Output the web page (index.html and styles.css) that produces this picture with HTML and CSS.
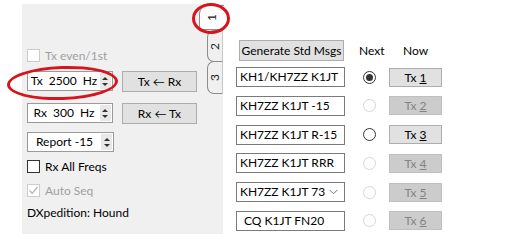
FILE: index.html
```html
<!DOCTYPE html>
<html lang="en">
<head>
    <meta charset="UTF-8">
    <meta name="viewport" content="width=device-width, initial-scale=1.0">
    <title>Tx Messages</title>
    <link rel="stylesheet" href="styles.css">
</head>
<body>
    <div class="window">
        <div class="panel">
            <div class="controls">
                <div class="check disabled"><span class="box"></span>Tx even/1st</div>
                <div class="spin-row">
                    <div class="spin">
                        <span class="spin-text">Tx  2500  Hz</span>
                        <span class="arrows"><i class="up"></i><i class="down"></i></span>
                    </div>
                    <button class="btn swap">Tx ← Rx</button>
                </div>
                <div class="spin-row second">
                    <div class="spin">
                        <span class="spin-text">Rx  300  Hz</span>
                        <span class="arrows"><i class="up"></i><i class="down"></i></span>
                    </div>
                    <button class="btn swap">Rx ← Tx</button>
                </div>
                <div class="spin report">
                    <span class="spin-text">Report -15</span>
                    <span class="arrows"><i class="up"></i><i class="down"></i></span>
                </div>
                <div class="check rx-all"><span class="box"></span>Rx All Freqs</div>
                <div class="check disabled auto-seq">
                    <span class="box">
                        <svg width="11" height="11" viewBox="0 0 11 11"><polyline points="1.5,5.5 4.2,8.3 9.5,2" fill="none" stroke="#b5b5b5" stroke-width="1.3"/></svg>
                    </span>Auto Seq
                </div>
                <div class="mode">DXpedition: Hound</div>
            </div>
            <div class="tabs">
                <div class="tab active"><span>1</span></div>
                <div class="tab"><span>2</span></div>
                <div class="tab"><span>3</span></div>
            </div>
        </div>

        <div class="messages">
            <div class="msg-head">
                <button class="btn gen">Generate Std Msgs</button>
                <span class="head-next">Next</span>
                <span class="head-now">Now</span>
            </div>
            <div class="msg-grid">
                <div class="field">KH1/KH7ZZ K1JT</div>
                <span class="radio checked"></span>
                <button class="btn tx">Tx <u>1</u></button>

                <div class="field">KH7ZZ K1JT -15</div>
                <span class="radio off"></span>
                <button class="btn tx off">Tx <u>2</u></button>

                <div class="field">KH7ZZ K1JT R-15</div>
                <span class="radio"></span>
                <button class="btn tx">Tx <u>3</u></button>

                <div class="field">KH7ZZ K1JT RRR</div>
                <span class="radio off"></span>
                <button class="btn tx off">Tx <u>4</u></button>

                <div class="field combo">KH7ZZ K1JT 73
                    <svg class="chevron" width="9" height="6" viewBox="0 0 9 6"><polyline points="0.5,0.8 4.5,4.8 8.5,0.8" fill="none" stroke="#777" stroke-width="1"/></svg>
                </div>
                <span class="radio off"></span>
                <button class="btn tx off">Tx <u>5</u></button>

                <div class="field indent">CQ K1JT FN20</div>
                <span class="radio off"></span>
                <button class="btn tx off">Tx <u>6</u></button>
            </div>
        </div>
    </div>

    <div class="mark mark-tab"></div>
    <div class="mark mark-freq"></div>
</body>
</html>
```

FILE: styles.css
```css
body {
    margin: 0;
    background-color: #fff;
    font-family: Lato, "Liberation Sans", sans-serif;
    font-size: 12px;
    color: #000;
    width: 508px;
    height: 252px;
    position: relative;
    overflow: hidden;
}

.window {
    display: flex;
    padding: 4px 0 0 22px;
}

.panel {
    display: flex;
    width: 201px;
    height: 230px;
    background-color: #f0f0f0;
}

.controls {
    width: 175px;
    padding-left: 5px;
    box-sizing: border-box;
    display: flex;
    flex-direction: column;
}

/* checkboxes */
.check {
    display: flex;
    align-items: center;
    gap: 5px;
    height: 13px;
    line-height: 13px;
    margin-top: 45px;
}

.check .box {
    width: 13px;
    height: 13px;
    box-sizing: border-box;
    border: 1px solid #333;
    background-color: #fff;
    display: flex;
    align-items: center;
    justify-content: center;
}

.check.disabled {
    color: #a0a0a0;
}

.check.disabled .box {
    border-color: #cccccc;
}

.rx-all {
    margin-top: 8px;
}

.auto-seq {
    margin-top: 11px;
}

.mode {
    margin-top: 8px;
    line-height: 15px;
}

/* spin boxes */
.spin-row {
    display: flex;
    gap: 9px;
    margin-top: 9px;
}

.spin-row.second {
    margin-top: 11px;
}

.spin {
    width: 87px;
    height: 20px;
    box-sizing: border-box;
    border: 1px solid #9a9a9a;
    background-color: #fff;
    display: flex;
}

.spin.report {
    margin-top: 8px;
}

.spin-text {
    flex: 1;
    text-align: center;
    white-space: pre;
    line-height: 18px;
}

.arrows {
    width: 11px;
    margin: 1px 1px 1px 0;
    background-color: #e8e8e8;
    display: flex;
    flex-direction: column;
    align-items: center;
    justify-content: center;
    gap: 3px;
}

.arrows i {
    width: 0;
    height: 0;
    border-left: 3px solid transparent;
    border-right: 3px solid transparent;
}

.arrows .up {
    border-bottom: 3px solid #333;
}

.arrows .down {
    border-top: 3px solid #333;
}

/* buttons */
.btn {
    font-family: inherit;
    font-size: 12px;
    color: #000;
    background-color: #e1e1e1;
    border: 1px solid #adadad;
    padding: 0;
    margin: 0;
    line-height: 17px;
}

.swap {
    width: 76px;
    height: 21px;
}

/* vertical tabs */
.tabs {
    width: 26px;
    padding-top: 1px;
    display: flex;
    flex-direction: column;
    align-items: flex-end;
}

.tab {
    width: 16px;
    box-sizing: border-box;
    border: 1px solid #8c8c8c;
    border-right: 1px solid #c8c8c8;
    border-radius: 7px 0 0 7px;
    background-color: #f0f0f0;
    display: flex;
    align-items: center;
    justify-content: center;
    color: #222;
}

.tab span {
    writing-mode: vertical-rl;
    transform: rotate(180deg);
    line-height: 12px;
}

.tab.active {
    width: 25px;
    height: 25px;
    background-color: #fff;
    border-right: none;
    border-radius: 9px 0 0 4px;
    margin-right: -1px;
}

.tab:nth-child(2) {
    height: 32px;
}

.tab:nth-child(3) {
    height: 33px;
    margin-top: -1px;
}

/* message column */
.messages {
    margin-left: 13px;
    padding-top: 36px;
}

.msg-head {
    display: grid;
    grid-template-columns: 109px 44px 53px;
    align-items: center;
    height: 21px;
    margin-bottom: 6px;
}

.gen {
    width: 105px;
    height: 21px;
    margin-left: 3px;
}

.head-next {
    margin-left: 14px;
    white-space: nowrap;
}

.head-now {
    text-align: center;
}

.msg-grid {
    display: grid;
    grid-template-columns: 109px 44px 53px;
    grid-auto-rows: 20px;
    row-gap: 8.8px;
    align-items: center;
}

.field {
    height: 20px;
    box-sizing: border-box;
    border: 1px solid #7a7a7a;
    background-color: #fff;
    padding-left: 3px;
    line-height: 18px;
    white-space: nowrap;
    display: flex;
    align-items: center;
}

.field.indent {
    padding-left: 7px;
}

.combo .chevron {
    margin-left: auto;
    margin-right: 6px;
}

.radio {
    width: 13px;
    height: 13px;
    box-sizing: border-box;
    margin-left: 18px;
    border: 1px solid #333;
    border-radius: 50%;
    background-color: #fff;
    display: flex;
    align-items: center;
    justify-content: center;
}

.radio.checked::after {
    content: "";
    width: 7px;
    height: 7px;
    border-radius: 50%;
    background-color: #333;
}

.radio.off {
    border-color: #d6d6d6;
}

.tx {
    width: 53px;
    height: 19px;
}

.tx.off {
    background-color: #cccccc;
    border-color: #bfbfbf;
    color: #838383;
}

/* red highlight rings drawn over the screenshot */
.mark {
    position: absolute;
    border: 3px solid #d7141c;
    border-radius: 50%;
    box-sizing: border-box;
}

.mark-tab {
    left: 192px;
    top: 3px;
    width: 38px;
    height: 31px;
}

.mark-freq {
    left: 7px;
    top: 66px;
    width: 111px;
    height: 34px;
    transform: rotate(-2deg);
}
```
